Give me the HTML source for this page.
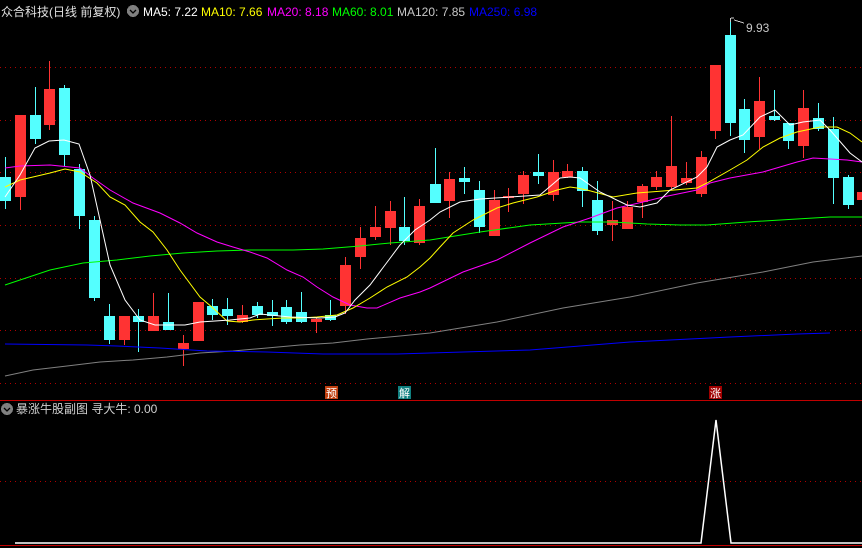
<!DOCTYPE html>
<html><head><meta charset="utf-8"><style>
html,body{margin:0;padding:0;background:#000;width:862px;height:548px;overflow:hidden}
svg{display:block}
text{font-family:"Liberation Sans","Noto Sans CJK SC",sans-serif}
</style></head><body>
<svg id="s" width="862" height="548" viewBox="0 0 862 548" xmlns="http://www.w3.org/2000/svg" shape-rendering="crispEdges">
<g stroke="#b00000" stroke-width="1" stroke-dasharray="1,4">
<line x1="0" y1="67.5" x2="862" y2="67.5"/><line x1="0" y1="120.5" x2="862" y2="120.5"/>
<line x1="0" y1="172.5" x2="862" y2="172.5"/><line x1="0" y1="225.5" x2="862" y2="225.5"/>
<line x1="0" y1="278.5" x2="862" y2="278.5"/><line x1="0" y1="330.5" x2="862" y2="330.5"/>
<line x1="0" y1="383.5" x2="862" y2="383.5"/><line x1="0" y1="481.5" x2="862" y2="481.5"/>
</g>
<line x1="0" y1="400.5" x2="862" y2="400.5" stroke="#c00000"/>
<line x1="0" y1="545.5" x2="862" y2="545.5" stroke="#c00000"/>
<g id="c"></g>
<g fill="none" stroke-width="1" shape-rendering="auto">
<polyline stroke="#808080" points="5,376 33,370 67,366 100,362 133,360 167,357 200,353 233,351 267,348 300,345 333,343 367,339 400,336 430,333 497,322 563,308 630,297 697,283 763,272 813,262 862,256"/>
<polyline stroke="#0000ff" points="5,344 87,345 117,346 160,348 207,351 267,352 323,354 397,354 430,353 530,350 630,342 730,337 797,334 830,333"/>
<polyline stroke="#00ff00" points="5,285 20,280 50,270 83,263 117,260 150,256 183,253 217,251 250,250 293,250 323,249 360,246 390,243 430,240 480,232 530,225 580,222 613,222 647,224 680,225 707,225 747,222 797,219 830,217 862,217"/>
<polyline stroke="#ff00ff" points="5,168 20,166 50,165 80,168 93,178 110,190 133,203 160,213 180,223 197,233 217,242 233,247 250,252 267,258 287,270 303,277 317,287 333,297 350,305 367,308 377,308 400,298 420,292 430,288 463,272 497,260 530,243 563,227 590,218 617,208 643,202 663,197 697,190 710,183 730,178 763,172 797,162 813,158 847,160 862,162"/>
<polyline stroke="#ffff00" points="5,187 20,180 33,177 50,173 65,169 80,172 97,183 110,197 125,205 140,222 153,232 167,250 180,270 200,297 213,308 227,321 240,322 253,320 267,319 283,318 300,318 317,317 337,315 353,308 370,298 387,287 407,277 420,267 430,258 440,247 453,233 473,220 497,208 513,203 537,197 557,190 570,187 577,188 587,190 613,197 637,193 663,191 697,188 707,183 730,170 747,160 763,147 780,138 797,132 820,127 837,127 850,133 862,142"/>
<polyline stroke="#ffffff" points="5,197 20,175 35,148 49,141 64,140 79,144 90,175 100,220 110,265 125,300 140,320 155,325 185,325 200,322 230,320 250,318 260,314 290,317 320,318 335,317 345,313 355,300 370,285 385,265 400,245 415,230 430,220 440,212 460,202 480,199 540,195 560,178 570,177 580,178 600,192 627,205 640,207 657,203 670,190 697,177 707,167 717,147 730,140 743,135 760,117 775,110 790,125 803,122 820,120 830,130 850,153 862,162"/>
<polyline stroke="#ffffff" stroke-width="1.5" points="15,543 701,543 716,420 731,543 862,543"/>
</g>
<path d="M730.5 22v-4M731 18h3M734 20l10 3" stroke="#ccc" fill="none"/>
<text x="746" y="32" fill="#c8c8c8" font-size="12">9.93</text>
<rect x="325" y="386" width="13" height="13" fill="#c04010"/><text x="331.5" y="397" fill="#fff" font-size="11" text-anchor="middle">预</text>
<rect x="398" y="386" width="13" height="13" fill="#108080"/><text x="404.5" y="397" fill="#fff" font-size="11" text-anchor="middle">解</text>
<rect x="709" y="386" width="13" height="13" fill="#a00000"/><text x="715.5" y="397" fill="#fff" font-size="11" text-anchor="middle">涨</text>
<g font-size="12">
<text x="1" y="16" fill="#e0e0e0">众合科技(日线 前复权)</text>
<circle cx="133" cy="11" r="6" fill="#808080"/><path d="M130 10l3 3 3-3" stroke="#000" fill="none" stroke-width="1.3" shape-rendering="auto"/>
<text x="143" y="16" fill="#fff">MA5: 7.22</text>
<text x="201" y="16" fill="#ffff00">MA10: 7.66</text>
<text x="267" y="16" fill="#ff00ff">MA20: 8.18</text>
<text x="332" y="16" fill="#00ff00">MA60: 8.01</text>
<text x="397" y="16" fill="#c8c8c8">MA120: 7.85</text>
<text x="469" y="16" fill="#0000ff">MA250: 6.98</text>
<circle cx="7" cy="409" r="6" fill="#808080"/><path d="M4 408l3 3 3-3" stroke="#000" fill="none" stroke-width="1.3" shape-rendering="auto"/>
<text x="16" y="413" fill="#d0d0d0">暴涨牛股副图  寻大牛: 0.00</text>
</g>
</svg>
<script>
var d=[[5,0,177,201,157,209],[20,1,115,197,115,210],[35,0,115,139,87,144],[49,1,89,125,61,130],[64,0,88,155,85,166],[79,0,169,216,164,229],[94,0,220,298,216,301],[109,0,316,340,304,344],[124,1,316,340,316,345],[138,0,316,322,309,352],[153,1,316,331,293,331],[168,0,322,330,293,330],[183,1,343,349,335,366],[198,1,302,341,302,341],[212,0,306,315,299,320],[227,0,309,316,298,325],[242,1,315,322,305,323],[257,0,306,315,302,318],[272,0,312,316,300,326],[286,0,307,322,300,324],[301,0,312,322,292,323],[316,1,319,322,317,333],[330,0,315,320,300,321],[345,1,265,306,257,314],[360,1,238,257,227,269],[375,1,227,237,206,240],[390,1,211,228,201,245],[404,0,227,241,197,245],[419,1,206,243,199,245],[435,0,184,203,148,203],[449,1,179,201,172,218],[464,0,178,182,167,194],[479,0,190,227,181,233],[494,1,200,236,190,236],[508,1,196,198,188,212],[523,1,175,194,171,204],[538,0,172,176,154,184],[553,1,172,195,160,201],[567,1,171,177,164,178],[582,0,171,191,167,207],[597,0,200,231,181,235],[612,1,220,225,201,241],[627,1,207,229,201,229],[642,1,186,202,184,218],[656,1,177,187,171,190],[671,1,166,187,116,190],[686,1,178,183,162,185],[701,1,157,194,151,197],[715,1,65,131,65,139],[730,0,35,123,22,136],[744,0,109,140,99,153],[759,1,101,137,77,149],[774,0,116,120,90,121],[788,0,123,141,123,149],[803,1,108,146,90,158],[818,0,118,129,103,131],[833,0,129,178,117,204],[848,0,177,205,175,209],[862,1,192,200,192,200]];
var g=document.getElementById('c'),s='';
d.forEach(function(c){var col=c[1]?'#ff3333':'#54ffff';
s+='<rect x="'+c[0]+'" y="'+c[4]+'" width="1" height="'+(c[5]-c[4])+'" fill="'+col+'"/>';
s+='<rect x="'+(c[0]-5)+'" y="'+c[2]+'" width="11" height="'+Math.max(2,c[3]-c[2])+'" fill="'+col+'"/>';});
g.innerHTML=s;
</script>
</body></html>
